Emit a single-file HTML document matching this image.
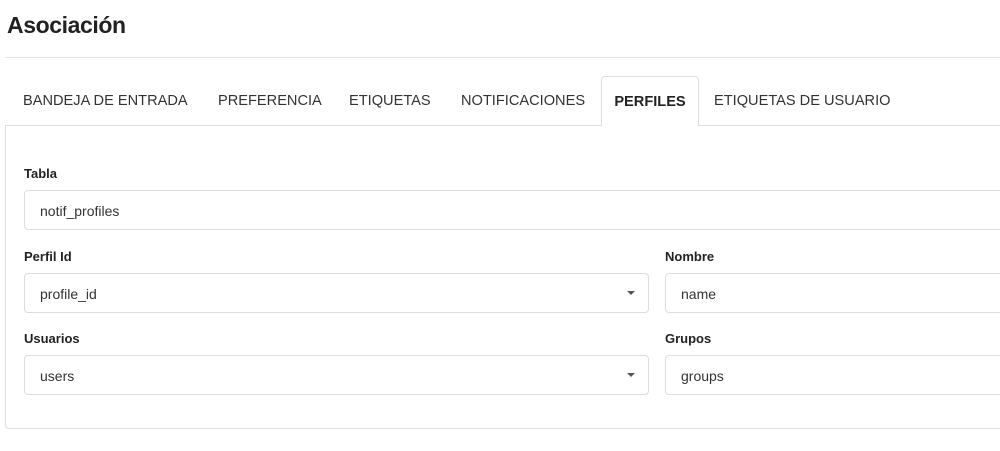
<!DOCTYPE html>
<html><head><style>
*{box-sizing:border-box;margin:0;padding:0}
body{width:1000px;height:451px;background:#fff;font-family:"Liberation Sans",sans-serif;color:#333;position:relative;overflow:hidden}
.a{position:absolute}
h1{position:absolute;left:7px;top:12px;font-size:23px;font-weight:bold;color:#222;letter-spacing:-0.4px}
.hr{left:5px;right:0;top:57px;height:1px;background:#e3e3e3}
.tab{top:93px;font-size:14.6px;color:#333;white-space:nowrap}
.act{left:601px;top:76px;width:98px;height:50px;border:1px solid #ddd;border-bottom:none;border-radius:4px 4px 0 0;background:#fff;font-weight:bold;font-size:14.6px;padding-top:17px;text-align:center;color:#222}
.panel{left:5px;top:125px;width:1010px;height:304px;border:1px solid #ddd;border-radius:0 0 4px 4px}
.lbl{font-size:13px;font-weight:bold;color:#222}
.inp{height:40px;border:1px solid #ddd;border-radius:4px;font-size:14px;padding:12px 0 0 15px;color:#333}
.car{position:absolute;right:13px;top:17px;width:0;height:0;border-left:4px solid transparent;border-right:4px solid transparent;border-top:4px solid #555}
</style></head><body>
<h1>Asociación</h1>
<div class="a hr"></div>
<div class="a panel"></div>
<div class="a tab" style="left:23px">BANDEJA DE ENTRADA</div>
<div class="a tab" style="left:218px">PREFERENCIA</div>
<div class="a tab" style="left:349px">ETIQUETAS</div>
<div class="a tab" style="left:461px">NOTIFICACIONES</div>
<div class="a act">PERFILES</div>
<div class="a tab" style="left:714px">ETIQUETAS DE USUARIO</div>

<div class="a lbl" style="left:24px;top:166px">Tabla</div>
<div class="a inp" style="left:24px;top:190px;width:990px">notif_profiles</div>

<div class="a lbl" style="left:24px;top:249px">Perfil Id</div>
<div class="a inp" style="left:24px;top:273px;width:625px">profile_id<span class="car"></span></div>
<div class="a lbl" style="left:665px;top:249px">Nombre</div>
<div class="a inp" style="left:665px;top:273px;width:350px">name</div>

<div class="a lbl" style="left:24px;top:331px">Usuarios</div>
<div class="a inp" style="left:24px;top:355px;width:625px">users<span class="car"></span></div>
<div class="a lbl" style="left:665px;top:331px">Grupos</div>
<div class="a inp" style="left:665px;top:355px;width:350px">groups</div>
</body></html>
